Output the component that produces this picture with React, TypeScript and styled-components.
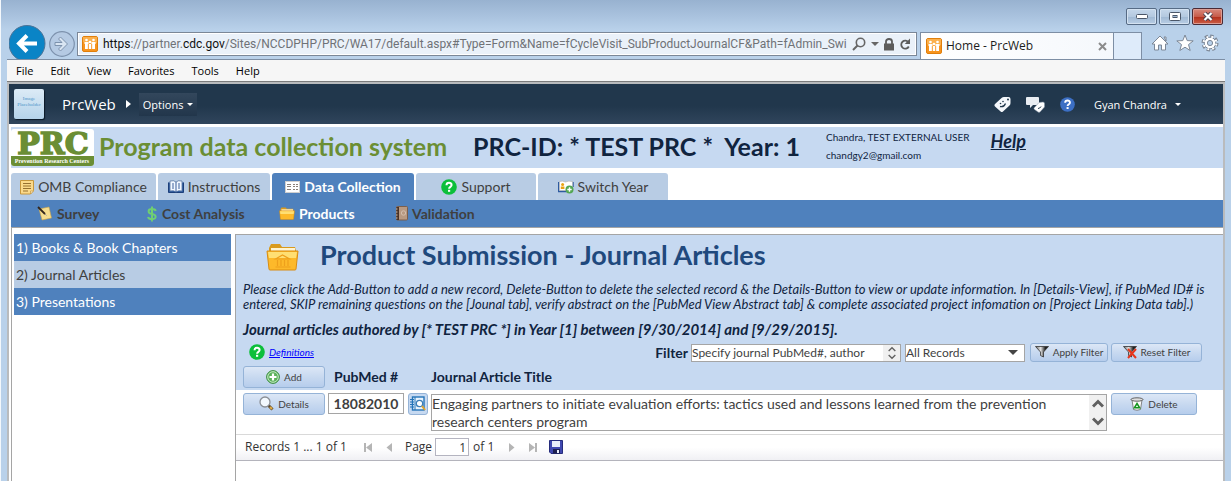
import React from "react";
import styled, { createGlobalStyle } from "styled-components";

const body = `Lato, "Open Sans", sans-serif`;
const chrome = `"Open Sans", "Noto Sans", sans-serif`;

const GlobalStyle = createGlobalStyle`
  * { box-sizing: border-box; }
  body { margin: 0; background: #b9d1ea; font-family: ${body}; color: #10243f; }
  button, input, textarea, select { font-family: inherit; margin: 0; }
  svg { display: block; flex: none; }
  a { color: inherit; text-decoration: none; }
`;

/* ---------- browser window ---------- */

const BrowserWindow = styled.div`
  min-height: 100vh;
  display: flex;
  flex-direction: column;
  padding: 0 6px;
  border-left: 1px solid #f4f8fc;
  background: linear-gradient(#98b2d0, #a9c2de 16px, #b9d1ea 30px, #b9d1ea);
`;

const TitleBar = styled.div`
  display: flex;
  justify-content: flex-end;
  gap: 2px;
  height: 25px;
  padding: 8px 2px 0 0;
`;

const WindowButton = styled.button<{ $close?: boolean }>`
  width: 31px;
  height: 17px;
  padding: 0;
  display: flex;
  align-items: center;
  justify-content: center;
  border: 1px solid ${(p) => (p.$close ? "#4a2a35" : "#566b85")};
  border-radius: 2px;
  box-shadow: inset 0 0 0 1px ${(p) => (p.$close ? "#dd9c92" : "#d4e2f1")};
  background: ${(p) =>
    p.$close
      ? "linear-gradient(#d8897c, #c75c4b 50%, #b22d1a 51%, #cb5f46)"
      : "linear-gradient(#c5d7ea, #b4c9e0 50%, #9fb8d3 51%, #b9cee5)"};
`;

const AddressRow = styled.div`
  display: flex;
  align-items: flex-start;
  height: 35px;
  border-bottom: 1px solid #7d8ea4;
`;

const NavButton = styled.button<{ $small?: boolean }>`
  padding: 0;
  border: 0;
  background: none;
  margin-top: ${(p) => (p.$small ? 6 : 0)}px;
  margin-left: 2px;
`;

const AddressBox = styled.div`
  flex: 1;
  min-width: 0;
  display: flex;
  align-items: center;
  height: 24px;
  margin: 7px 3px 0 2px;
  padding: 0 5px 0 4px;
  gap: 5px;
  border: 1px solid #7b8797;
  box-shadow: inset 0 0 0 1px #fff;
  background: #eaf1f9;
`;

const Url = styled.div`
  flex: 1;
  min-width: 0;
  overflow: hidden;
  white-space: nowrap;
  font: 12px/18px Roboto, sans-serif;
  color: #6f7277;
  b { font-weight: 400; color: #101010; }
`;

const PlainButton = styled.button`
  padding: 0;
  border: 0;
  background: none;
  display: flex;
`;

const BrowserTab = styled.div`
  width: 194px;
  height: 27px;
  margin-top: 7px;
  padding: 0 6px 0 5px;
  display: flex;
  align-items: center;
  gap: 4px;
  border: 1px solid #7d8ea4;
  border-bottom: 0;
  background: linear-gradient(90deg, #fff, #f5f8fc);
  font: 12px/18px ${chrome};
  color: #1c1c1c;
  span { flex: 1; }
`;

const NewTab = styled.button`
  width: 28px;
  height: 27px;
  margin-top: 7px;
  border: 1px solid #7d8ea4;
  border-width: 1px 1px 0 0;
  background: #deebfa;
`;

const ToolIcons = styled.div`
  display: flex;
  gap: 7px;
  margin-top: 9px;
  padding: 0 6px 0 9px;
`;

const MenuBar = styled.nav`
  display: flex;
  gap: 17px;
  height: 22px;
  padding: 0 9px;
  background: #f6f6f6;
  border-bottom: 1px solid #7c7c7c;
  font: 11px/21px ${chrome};
  color: #000;
  button { padding: 0; border: 0; background: none; font: inherit; color: inherit; }
`;

const Page = styled.main`
  flex: 1;
  display: flex;
  flex-direction: column;
  border: 2px solid #b9bbbd;
  border-bottom: 0;
  background: #fff;
`;

/* ---------- site ribbon ---------- */

const Ribbon = styled.header`
  display: flex;
  align-items: center;
  height: 40px;
  padding: 0 42px 0 5px;
  background: linear-gradient(#21374c, #21374c 55%, #30455c);
  color: #fff;
  font-family: ${chrome};
`;

const SiteImage = styled.div`
  width: 30px;
  height: 30px;
  margin-right: 18px;
  padding-top: 7px;
  border-radius: 2px;
  background: linear-gradient(#dcebf6, #b5d3ea);
  box-shadow: 1px 1px 1px #0c1a28;
  color: #4a93c9;
  font: 5px/6px "Liberation Serif", serif;
  text-align: center;
`;

const SiteName = styled.a`
  font-size: 15px;
  margin-right: 10px;
`;

const OptionsButton = styled.button`
  display: flex;
  align-items: center;
  gap: 4px;
  height: 23px;
  margin-left: 8px;
  padding: 0 4px;
  border: 0;
  background: linear-gradient(#33475c, #22364b);
  color: #fff;
  font-size: 11px;
`;

const RibbonTools = styled.div`
  display: flex;
  align-items: center;
  gap: 15px;
  margin-left: auto;
`;

const UserButton = styled.button`
  display: flex;
  align-items: center;
  gap: 8px;
  padding: 0;
  margin-left: 4px;
  border: 0;
  background: none;
  color: #fff;
  font-size: 11px;
`;

/* ---------- banner ---------- */

const Banner = styled.div`
  display: flex;
  align-items: center;
  height: 41px;
  margin: 3px 0 5px 2px;
  background: #c6d9f1;
`;

const BannerTitle = styled.h1<{ $green?: boolean }>`
  margin: 0 0 0 ${(p) => (p.$green ? 5 : 26)}px;
  padding-bottom: 4px;
  font-size: 25px;
  line-height: 30px;
  font-weight: 700;
  white-space: pre;
  color: ${(p) => (p.$green ? "#6b8e34" : "#10243f")};
`;

const Account = styled.div`
  margin-left: 26px;
  padding-bottom: 4px;
  font-size: 10px;
  line-height: 18px;
  white-space: nowrap;
`;

const HelpLink = styled.a`
  align-self: flex-start;
  margin-left: 21px;
  margin-top: 3px;
  font: italic 700 18px/22px ${body};
  text-decoration: underline;
`;

/* ---------- tabs ---------- */

const Tabs = styled.nav`
  display: flex;
  gap: 2px;
  margin-left: 2px;
`;

const Tab = styled.a<{ $width: number; $active?: boolean }>`
  width: ${(p) => p.$width}px;
  height: 27px;
  display: flex;
  align-items: center;
  justify-content: center;
  gap: 4px;
  border-radius: 3px 3px 0 0;
  white-space: nowrap;
  font-size: 14px;
  font-weight: ${(p) => (p.$active ? 700 : 400)};
  color: ${(p) => (p.$active ? "#fff" : "#3f3f3f")};
  background: ${(p) => (p.$active ? "#4f81bd" : "#b8cce4")};
`;

const SubNav = styled.nav`
  display: flex;
  height: 28px;
  margin-left: 2px;
  padding-left: 26px;
  background: #4f81bd;
  border-bottom: 1px solid #a5a5a5;
`;

const SubLink = styled.a<{ $width: number; $active?: boolean }>`
  width: ${(p) => p.$width}px;
  display: flex;
  align-items: center;
  gap: 4px;
  font-size: 14px;
  font-weight: 700;
  white-space: nowrap;
  color: ${(p) => (p.$active ? "#fff" : "#3f3f3f")};
`;

/* ---------- content ---------- */

const Columns = styled.div`
  flex: 1;
  display: flex;
  gap: 4px;
  margin-left: 2px;
  padding: 6px 0 0 2px;
  border-left: 1px solid #a5a5a5;
`;

const SideNav = styled.nav`
  width: 217px;
  display: flex;
  flex-direction: column;
`;

const SideLink = styled.a<{ $active?: boolean }>`
  height: 27px;
  padding-left: 2px;
  font-size: 14px;
  line-height: 27px;
  color: ${(p) => (p.$active ? "#3f3f3f" : "#fff")};
  background: ${(p) => (p.$active ? "#b8cce4" : "#4f81bd")};
`;

const Panel = styled.section`
  flex: 1;
  min-width: 0;
  border: 1px solid #a5a5a5;
  border-width: 1px 0 0 1px;
`;

const PanelHead = styled.div`
  padding: 5px 7px 0;
  background: #c6d9f1;
`;

const TitleRow = styled.div`
  display: flex;
  align-items: center;
  gap: 21px;
  height: 34px;
  padding-left: 23px;
  h2 { margin: 0; padding-bottom: 4px; font-size: 27px; line-height: 30px; color: #1f497d; }
`;

const Instructions = styled.p`
  margin: 8px 0 0;
  font-size: 13px;
  line-height: 15px;
  font-style: italic;
`;

const Scope = styled.p`
  margin: 7px 0 0;
  font-size: 15px;
  line-height: 20px;
  font-weight: 700;
  font-style: italic;
`;

const FilterRow = styled.div`
  display: flex;
  align-items: center;
  height: 27px;
  padding: 0 14px 0 6px;
`;

const Definitions = styled.a`
  display: flex;
  align-items: center;
  gap: 4px;
  margin-right: auto;
  padding-bottom: 2px;
  font-size: 10px;
  font-style: italic;
  color: #0000ff;
  text-decoration: underline;
`;

const FilterLabel = styled.label`
  margin-right: 3px;
  font-size: 14px;
  font-weight: 700;
`;

const ScrollBox = styled.div<{ $width: string; $height: number }>`
  display: flex;
  width: ${(p) => p.$width};
  height: ${(p) => p.$height}px;
  border: 1px solid #a5a5a5;
  background: #fff;
`;

const ScrollText = styled.textarea<{ $size: number; $line: number }>`
  flex: 1;
  min-width: 0;
  padding: 0;
  border: 0;
  outline: 0;
  resize: none;
  overflow: hidden;
  background: none;
  color: #3f3f3f;
  font-size: ${(p) => p.$size}px;
  line-height: ${(p) => p.$line}px;
`;

const ScrollTrack = styled.div`
  width: 17px;
  display: flex;
  flex-direction: column;
  align-items: center;
  justify-content: space-around;
  background: #f0f0f0;
`;

const SelectWrap = styled.div`
  display: grid;
  align-items: center;
  width: 120px;
  height: 18px;
  margin: 0 5px 0 4px;
  border: 1px solid #a5a5a5;
  background: #fff;
  select, svg { grid-area: 1 / 1; }
  svg { justify-self: end; margin-right: 6px; pointer-events: none; }
  select {
    appearance: none;
    width: 100%;
    padding: 0;
    border: 0;
    background: none;
    color: #3f3f3f;
    font-size: 12px;
    line-height: 15px;
  }
`;

const ActionButton = styled.button<{ $width: number; $short?: boolean }>`
  display: inline-flex;
  align-items: center;
  justify-content: center;
  gap: 4px;
  width: ${(p) => p.$width}px;
  height: ${(p) => (p.$short ? 19 : 22)}px;
  padding: 0 0 1px;
  vertical-align: top;
  border: 1px solid #95b3d7;
  border-radius: 3px;
  background: linear-gradient(#dce7f6, #c8d9f0 50%, #b6cdec);
  color: #3f3f3f;
  font-size: 10px;
  line-height: 12px;
  white-space: nowrap;
  & + & { margin-left: 3px; }
`;

const RecordTable = styled.table`
  width: 100%;
  border-collapse: collapse;
  table-layout: fixed;
  th, td { padding: 0; text-align: left; vertical-align: top; }
  th { height: 24px; background: #c6d9f1; font-size: 14px; line-height: 22px; }
  th:first-child, td:first-child { padding-left: 7px; }
  td { height: 44px; padding-top: 3px; border-bottom: 1px solid #d9d9d9; }
  .key { width: 92px; }
  .pubmed { width: 103px; }
  .actions { width: 112px; }
`;

const HeadText = styled.span`
  padding-left: 6px;
`;

const PubMedCell = styled.div`
  display: flex;
  gap: 4px;
`;

const PubMedInput = styled.input`
  width: 76px;
  height: 21px;
  padding: 0;
  border: 1px solid #a5a5a5;
  font-size: 14px;
  font-weight: 700;
  text-align: center;
  color: #3f3f3f;
`;

const LookupButton = styled.button`
  width: 20px;
  height: 22px;
  padding: 0;
  display: flex;
  align-items: center;
  justify-content: center;
  border: 1px solid #95b3d7;
  border-radius: 3px;
  background: #c6d9f1;
`;

const TitleCell = styled.div`
  padding: 1px 4px 0 0;
`;

const Pager = styled.div`
  display: flex;
  align-items: center;
  height: 26px;
  padding-left: 9px;
  border-bottom: 1px solid #b4b4bc;
  background: linear-gradient(#fff 50%, #f0f0f4);
  font: 12px/16px ${chrome};
  color: #333;
`;

const PagerIcon = styled.button<{ $gap: number }>`
  padding: 0;
  border: 0;
  background: none;
  margin-left: ${(p) => p.$gap}px;
`;

const PageLabel = styled.label`
  display: flex;
  align-items: center;
  gap: 3px;
  margin: 0 4px 0 11px;
  input {
    width: 34px;
    height: 18px;
    padding: 0 2px;
    border: 1px solid #b4b4c0;
    font: inherit;
    text-align: right;
    color: #333;
  }
`;

/* ---------- icons ---------- */

const People = () => (
  <svg width="16" height="16" viewBox="0 0 16 16">
    <rect x=".5" y=".5" width="15" height="15" rx="1.5" fill="#f7941e" stroke="#e07f0c" />
    <path d="M1 1h14v6Q8 9 1 6z" fill="#fbb04c" />
    <g fill="#fff">
      <circle cx="4.5" cy="4" r="1.3" /><circle cx="11.5" cy="4" r="1.3" /><circle cx="8" cy="6" r="1.3" />
      <path d="M2.5 6h4v2H6v5H3V8h-.5zM9.5 6h4v2H13v5h-3V8h-.5zM6.5 8h3v5h-3z" />
    </g>
    <path d="M6.3 8v5M9.7 8v5" stroke="#f7941e" strokeWidth=".7" />
  </svg>
);

const Caret = ({ size = 6, color = "#fff" }: { size?: number; color?: string }) => (
  <svg width={size} height={size / 2} viewBox="0 0 6 3"><path d="M0 0h6L3 3z" fill={color} /></svg>
);

const QuestionDot = ({ fill, size = 16 }: { fill: string; size?: number }) => (
  <svg width={size} height={size} viewBox="0 0 16 16">
    <circle cx="8" cy="8" r="7.8" fill={fill} />
    <path d="M5.5 6.2C5.500 3 10.700 3 10.600 6.100c0 1.800-2.500 1.700-2.500 3.600" fill="none" stroke="#fff" strokeWidth="2" />
    <rect x="7" y="10.8" width="2.2" height="2" fill="#fff" />
  </svg>
);

const Chevron = ({ up, size }: { up?: boolean; size: number }) => (
  <svg width={size} height={(size * 3) / 4} viewBox="0 0 12 9">
    <path d={up ? "M1 7.500 6 2.500l5 5" : "M1 1.500l5 5 5-5"} fill="none" stroke="#606060" strokeWidth={size > 8 ? 3 : 2} />
  </svg>
);

const Funnel = ({ reset }: { reset?: boolean }) => (
  <svg width="14" height="14" viewBox="0 0 14 14">
    <defs>
      <linearGradient id={reset ? "fr" : "fa"}><stop stopColor="#666" /><stop offset=".4" stopColor="#e4e4e4" /><stop offset=".75" stopColor="#222" /></linearGradient>
    </defs>
    <path d="M.5 1.500h13L8.500 7v5l-3-1.500V7z" fill={`url(#${reset ? "fr" : "fa"})`} stroke="#333" strokeWidth=".8" />
    {reset && <path d="M5 4l8 9M13 4l-8 9" stroke="#e8361c" strokeWidth="2" />}
  </svg>
);

const Folder = ({ bank }: { bank?: boolean }) => (
  <svg width={bank ? 33 : 16} height={bank ? 28 : 13} viewBox="0 0 33 28" preserveAspectRatio="none">
    <path d="M3 5l2-4h9l2 3h13l1 4v18H3z" fill="#d99a1d" />
    <path d="M5 5h24v6H5z" fill="#fff3cf" />
    <path d="M1 8h31l-2 18q0 1-1 1H4q-1 0-1-1z" fill="#fdb92a" stroke="#d98c10" />
    <path d="M2 9h29l-1 6H3z" fill="#ffdf73" />
    {bank && <path d="M9.500 16l7-4 7 4zM11.500 17v6M15 17v6M18.500 17v6M22 17v6M9.500 24h15" fill="none" stroke="#eea01c" strokeWidth="1.2" />}
  </svg>
);

const Note = () => (
  <svg width="14" height="16" viewBox="0 0 14 16">
    <path d="M.5 1.500h13v10l-3 3.500H.5z" fill="#fbd98a" stroke="#c6963c" />
    <path d="M3 4.500h8M3 7h8M3 9.500h8M3 12h5" stroke="#96702f" />
    <path d="M10.500 15v-3h3z" fill="#fff3d0" stroke="#c6963c" strokeWidth=".7" />
  </svg>
);

const Book = () => (
  <svg width="16" height="14" viewBox="0 0 16 14">
    <path d="M.5 2.500v10h15v-10" fill="#2d5aa0" stroke="#1c3f7a" />
    <path d="M2 1q4-1 6 1 2-2 6-1v10q-4-1-6 1-2-2-6-1z" fill="#f2f7ff" stroke="#57759f" strokeWidth=".8" />
    <path d="M8 2v10M4 4h2M4 6h2M4 8h2M10 4h2M10 6h2M10 8h2" stroke="#3a5f9a" />
  </svg>
);

const Grid = () => (
  <svg width="15" height="12" viewBox="0 0 15 12">
    <rect x=".5" y=".5" width="14" height="11" fill="#fff" stroke="#cfcfcf" />
    <path d="M2 3.500h4M2 5.500h4M2 8.500h4M8 3.500h2M11 3.500h2M8 5.500h2M11 5.500h2M8 8.500h2M11 8.500h2" stroke="#8a8078" />
  </svg>
);

const SwitchIcon = () => (
  <svg width="16" height="14" viewBox="0 0 16 14">
    <path d="M.5 2v9.500h8M15 2v5" fill="none" stroke="#2d5aa0" strokeWidth="1.4" />
    <path d="M1.500 1.500q3-1 6 .5 3-1.500 7-.5v9h-13z" fill="#fff" stroke="#aaa" strokeWidth=".6" />
    <circle cx="4.6" cy="4.5" r="1.5" fill="#e8a313" /><path d="M2.800 9V6.500h3.600V9z" fill="#e8a313" />
    <circle cx="11.5" cy="9.5" r="4" fill="#53a653" /><path d="M11.500 7.300v4.400M9.300 9.500h4.400" stroke="#fff" strokeWidth="1.4" />
  </svg>
);

const SurveyIcon = () => (
  <svg width="16" height="15" viewBox="0 0 16 15">
    <path d="M2 3l10-2 2.500 11L5 14z" fill="#f6dd8e" stroke="#c7a14a" strokeWidth=".6" />
    <path d="M1 1l7 7" stroke="#33261c" strokeWidth="1.8" /><path d="M8 8l1.500 1.500" stroke="#999" />
  </svg>
);

const Dollar = () => (
  <svg width="12" height="16" viewBox="0 0 12 16">
    <path d="M9.800 4.800Q9 3 6 3 2.600 3 2.600 5.300T6 8t3.600 2.700T6 13.200Q2.600 13.200 2 11M6 .5v15" fill="none" stroke="#6fcf72" strokeWidth="2" />
  </svg>
);

const Journal = () => (
  <svg width="13" height="15" viewBox="0 0 13 15">
    <rect x="1.5" y=".5" width="11" height="13.5" rx="1" fill="#b99a82" stroke="#7d5f4b" />
    <path d="M1.500 1h2.500v13H1.500z" fill="#4a3226" />
    <path d="M1 3h1.500M1 6h1.500M1 9h1.500M1 12h1.500" stroke="#cbbdb2" />
    <circle cx="8.5" cy="7" r="2.2" fill="none" stroke="#d5bfad" />
  </svg>
);

const Plus = () => (
  <svg width="14" height="14" viewBox="0 0 14 14">
    <circle cx="7" cy="7" r="6.4" fill="#5cb25c" stroke="#3f8f45" />
    <circle cx="7" cy="7" r="5.3" fill="none" stroke="#c6e8c6" />
    <path d="M7 3.500v7M3.500 7h7" stroke="#fff" strokeWidth="2.2" />
  </svg>
);

const Magnifier = () => (
  <svg width="15" height="15" viewBox="0 0 15 15">
    <path d="M9.500 9.500l4 4" stroke="#5d4a2c" strokeWidth="3" /><path d="M11 11l2 2" stroke="#e2ad45" strokeWidth="2" />
    <circle cx="6" cy="6" r="5" fill="#f3f9ff" stroke="#8a8f96" strokeWidth="1.3" />
  </svg>
);

const Lookup = () => (
  <svg width="16" height="16" viewBox="0 0 16 16">
    <rect x="2.5" y="1" width="11.5" height="13" fill="#e8f3fd" stroke="#2574b8" strokeWidth="1.4" />
    <path d="M0 3.500h4M0 6h4M0 8.500h4M0 11h4" stroke="#2574b8" /><path d="M5 1v13" stroke="#2574b8" />
    <circle cx="9.5" cy="7.5" r="3.2" fill="#fff" stroke="#3d7fb8" strokeWidth="1.3" />
    <path d="M12 10l3 4" stroke="#e0a52e" strokeWidth="2" />
  </svg>
);

const Bin = () => (
  <svg width="14" height="14" viewBox="0 0 14 14">
    <path d="M2 3l1.500 9.500q3.500 1.500 7 0L12 3z" fill="#fafafa" stroke="#777" strokeWidth=".9" />
    <ellipse cx="7" cy="2.5" rx="6" ry="1.7" fill="#ddd" stroke="#555" strokeWidth=".9" />
    <path d="M7 6.500l2.600 4.300H4.400z" fill="none" stroke="#14951f" strokeWidth="1.5" />
  </svg>
);

const Disk = () => (
  <svg width="14" height="14" viewBox="0 0 14 14">
    <path d="M.5.5h13v13H2L.5 12z" fill="#4048b0" stroke="#262c7c" />
    <path d="M3 1h8v6H3z" fill="#e9eefb" /><path d="M4 9h7v4.500H4z" fill="#1d2050" /><path d="M8 10h2v3H8z" fill="#e9eefb" />
  </svg>
);

const Step = ({ back, end }: { back?: boolean; end?: boolean }) => (
  <svg width="9" height="9" viewBox="0 0 9 9">
    <g transform={back ? "translate(9 0) scale(-1 1)" : undefined}>
      <path d={end ? "M0 0l6 4.500L0 9zM6 0h2v9H6z" : "M2 0l5.500 4.500L2 9z"} fill="#b5b5b5" />
    </g>
  </svg>
);

const PrcLogo = () => (
  <svg width="83" height="37" viewBox="0 0 83 37" overflow="visible">
    <rect width="83" height="37" rx="3" fill="#fff" />
    <path d="M0 27h83v7q0 3-3 3H3q-3 0-3-3z" fill="#6b8e34" />
    <text x="42" y="25" textAnchor="middle" fontFamily="DejaVu Serif" fontWeight="700" fontSize="30" fill="#6b8e34" stroke="#6b8e34" strokeWidth="1.5">PRC</text>
    <text x="41" y="34" textAnchor="middle" fontFamily="Liberation Serif" fontWeight="700" fontSize="6" fill="#fff">Prevention Research Centers</text>
  </svg>
);

/* ---------- app ---------- */

export default function App() {
  return (
    <BrowserWindow>
      <GlobalStyle />
      <TitleBar>
        <WindowButton aria-label="Minimize">
          <svg width="12" height="5" viewBox="0 0 12 5"><rect x=".5" y=".5" width="11" height="4" rx="1" fill="#fff" stroke="#4a5668" /></svg>
        </WindowButton>
        <WindowButton aria-label="Maximize">
          <svg width="12" height="9" viewBox="0 0 12 9"><rect x=".5" y=".5" width="11" height="8" rx="1" fill="#fff" stroke="#4a5668" /><rect x="4" y="3.5" width="4" height="2" fill="#9fb8d3" stroke="#4a5668" /></svg>
        </WindowButton>
        <WindowButton $close aria-label="Close">
          <svg width="12" height="9" viewBox="0 0 12 9"><path d="M2.500 1l7 7M9.500 1l-7 7" stroke="#43404f" strokeWidth="4" /><path d="M2.500 1l7 7M9.500 1l-7 7" stroke="#fff" strokeWidth="2.2" /></svg>
        </WindowButton>
      </TitleBar>

      <AddressRow>
        <NavButton aria-label="Back">
          <svg width="38" height="34" viewBox="0 0 38 34">
            <circle cx="18" cy="18.5" r="18" fill="#0a84c6" stroke="#4d7396" />
            <path d="M28 18.500H11M18 10.500l-8 8 8 8" fill="none" stroke="#fff" strokeWidth="4" />
          </svg>
        </NavButton>
        <NavButton $small aria-label="Forward">
          <svg width="26" height="26" viewBox="0 0 26 26">
            <circle cx="13" cy="13" r="12.3" fill="#b5cae3" stroke="#7d92ad" strokeWidth="1.2" />
            <path d="M6 11.500h7l-3.500-3.500 2-2 7 7-7 7-2-2L13 14.500H6z" fill="#d9e5f2" stroke="#7d92ad" />
          </svg>
        </NavButton>
        <AddressBox>
          <People />
          <Url><b>https</b>://partner.<b>cdc.gov</b>/Sites/NCCDPHP/PRC/WA17/default.aspx#Type=Form&amp;Name=fCycleVisit_SubProductJournalCF&amp;Path=fAdmin_Swi</Url>
          <PlainButton aria-label="Search">
            <svg width="14" height="14" viewBox="0 0 14 14"><circle cx="8.5" cy="5.5" r="4.2" fill="none" stroke="#666" strokeWidth="1.6" /><path d="M5.500 8.500L1 13" stroke="#666" strokeWidth="2" /></svg>
          </PlainButton>
          <Caret size={8} color="#666" />
          <svg width="10" height="13" viewBox="0 0 10 13"><path d="M2 6V3.500q0-2.500 3-2.500t3 2.500V6" fill="none" stroke="#5c5c5c" strokeWidth="1.8" /><rect y="5.5" width="10" height="7" fill="#5c5c5c" /></svg>
          <PlainButton aria-label="Refresh">
            <svg width="12" height="13" viewBox="0 0 12 13"><path d="M9.600 4.500A4 4 0 1 0 9.800 8.500" fill="none" stroke="#5c5c5c" strokeWidth="1.8" /><path d="M11 .5V6H5.800z" fill="#5c5c5c" /></svg>
          </PlainButton>
        </AddressBox>
        <BrowserTab>
          <People />
          <span>Home - PrcWeb</span>
          <PlainButton aria-label="Close tab">
            <svg width="9" height="9" viewBox="0 0 9 9"><path d="M1 1l7 7M8 1L1 8" stroke="#8b8b8b" strokeWidth="2" /></svg>
          </PlainButton>
        </BrowserTab>
        <NewTab aria-label="New tab" />
        <ToolIcons>
          <PlainButton aria-label="Home">
            <svg width="18" height="18" viewBox="0 0 18 18"><path d="M9 2l8 8H14.500v6h-4v-5h-3v5h-4v-6H1zM13 3h2v4z" fill="#fff" stroke="#7c8796" strokeLinejoin="round" /></svg>
          </PlainButton>
          <PlainButton aria-label="Favorites">
            <svg width="18" height="18" viewBox="0 0 18 18"><path d="M9 1l2.200 5.600 6 .3-4.700 3.700 1.700 5.900L9 13.200l-5.200 3.300 1.700-5.900L.8 6.900l6-.3z" fill="#fff" stroke="#7c8796" /></svg>
          </PlainButton>
          <PlainButton aria-label="Tools">
            <svg width="18" height="18" viewBox="0 0 18 18">
              <circle cx="9" cy="9" r="6.8" fill="none" stroke="#7c8796" strokeWidth="3.4" strokeDasharray="3.2 2.14" />
              <circle cx="9" cy="9" r="5.8" fill="#fff" stroke="#7c8796" />
              <circle cx="9" cy="9" r="6.4" fill="none" stroke="#fff" strokeWidth="2" strokeDasharray="1.8 3.227" strokeDashoffset="-.6" />
              <circle cx="9" cy="9" r="2.6" fill="#b9d1ea" stroke="#7c8796" />
            </svg>
          </PlainButton>
        </ToolIcons>
      </AddressRow>

      <MenuBar>
        {["File", "Edit", "View", "Favorites", "Tools", "Help"].map((m) => <button key={m}>{m}</button>)}
      </MenuBar>

      <Page>
        <Ribbon>
          <SiteImage>Image<br />Placeholder</SiteImage>
          <SiteName href="#home">PrcWeb</SiteName>
          <svg width="5" height="8" viewBox="0 0 5 8"><path d="M0 0l5 4-5 4z" fill="#fff" /></svg>
          <OptionsButton>Options <Caret size={6} /></OptionsButton>
          <RibbonTools>
            <PlainButton aria-label="Tag">
              <svg width="17" height="17" viewBox="0 0 17 17"><path d="M1 8l6.500-6Q8.500 1 10 1h4.500q2 0 2 2v4q0 1.500-1 2.500L9 15.500q-1.200 1-2.400 0L1 10.500q-1.200-1.200 0-2.500z" fill="#f4f7fb" /><circle cx="14" cy="3.5" r="1" fill="#21374c" /><path d="M6 10.500q4 1 5.500-3" fill="none" stroke="#21374c" strokeWidth="1.3" /><circle cx="6.5" cy="7.5" r=".8" fill="#21374c" /><circle cx="9" cy="5.5" r=".8" fill="#21374c" /></svg>
            </PlainButton>
            <PlainButton aria-label="Comments">
              <svg width="19" height="17" viewBox="0 0 19 17"><path d="M1 1h11q1 0 1 1v6q0 1-1 1H7l-3 3V9H1Q0 9 0 8V2q0-1 1-1z" fill="#e9edf2" /><path d="M8 12l5-5.500 4-.5q1.500 0 1.500 1.500V11L14 16q-1 .8-2 0l-3.500-2.500q-.8-.7-.5-1.500z" fill="#fff" stroke="#8190a2" strokeWidth=".5" /><path d="M12 12.500q2 0 3-2" fill="none" stroke="#21374c" /></svg>
            </PlainButton>
            <PlainButton aria-label="Help"><QuestionDot fill="#3c6fc4" size={15} /></PlainButton>
            <UserButton>Gyan Chandra <Caret size={6} /></UserButton>
          </RibbonTools>
        </Ribbon>

        <Banner>
          <PrcLogo />
          <BannerTitle $green>Program data collection system</BannerTitle>
          <BannerTitle as="h2">{"PRC-ID: * TEST PRC *  Year: 1"}</BannerTitle>
          <Account>Chandra, TEST EXTERNAL USER<br />chandgy2@gmail.com</Account>
          <HelpLink href="#help">Help</HelpLink>
        </Banner>

        <Tabs>
          <Tab href="#omb" $width={145}><Note />OMB Compliance</Tab>
          <Tab href="#instructions" $width={112}><Book />Instructions</Tab>
          <Tab href="#data" $width={142} $active><Grid />Data Collection</Tab>
          <Tab href="#support" $width={120}><QuestionDot fill="#0cbf3a" />Support</Tab>
          <Tab href="#year" $width={130}><SwitchIcon />Switch Year</Tab>
        </Tabs>
        <SubNav>
          <SubLink href="#survey" $width={109}><SurveyIcon />Survey</SubLink>
          <SubLink href="#cost" $width={133}><Dollar />Cost Analysis</SubLink>
          <SubLink href="#products" $width={116} $active><Folder />Products</SubLink>
          <SubLink href="#validation" $width={100}><Journal />Validation</SubLink>
        </SubNav>

        <Columns>
          <SideNav>
            <SideLink href="#books">1) Books &amp; Book Chapters</SideLink>
            <SideLink href="#journals" $active>2) Journal Articles</SideLink>
            <SideLink href="#presentations">3) Presentations</SideLink>
          </SideNav>
          <Panel>
            <PanelHead>
              <TitleRow><Folder bank /><h2>Product Submission - Journal Articles</h2></TitleRow>
              <Instructions>
                Please click the Add-Button to add a new record, Delete-Button to delete the selected record &amp; the Details-Button to view or update information. In [Details-View], if PubMed ID# is entered, SKIP remaining questions on the [Jounal tab], verify abstract on the [PubMed View Abstract tab] &amp; complete associated project infomation on [Project Linking Data tab].)
              </Instructions>
              <Scope>Journal articles authored by [* TEST PRC *] in Year [1] between [9/30/2014] and [9/29/2015].</Scope>
              <FilterRow>
                <Definitions href="#definitions"><QuestionDot fill="#0cbf3a" />Definitions</Definitions>
                <FilterLabel htmlFor="filter">Filter</FilterLabel>
                <ScrollBox $width="210px" $height={18}>
                  <ScrollText id="filter" rows={1} $size={12} $line={16} defaultValue="Specify journal PubMed#, author" />
                  <ScrollTrack><Chevron up size={8} /><Chevron size={8} /></ScrollTrack>
                </ScrollBox>
                <SelectWrap>
                  <select aria-label="Record filter"><option>All Records</option></select>
                  <Caret size={10} color="#444" />
                </SelectWrap>
                <ActionButton $width={78} $short><Funnel />Apply Filter</ActionButton>
                <ActionButton $width={91} $short><Funnel reset />Reset Filter</ActionButton>
              </FilterRow>
            </PanelHead>

            <RecordTable>
              <thead>
                <tr>
                  <th className="key"><ActionButton $width={82}><Plus />Add</ActionButton></th>
                  <th className="pubmed"><HeadText>PubMed #</HeadText></th>
                  <th>Journal Article Title</th>
                  <th className="actions" aria-label="Actions" />
                </tr>
              </thead>
              <tbody>
                <tr>
                  <td><ActionButton $width={82}><Magnifier />Details</ActionButton></td>
                  <td>
                    <PubMedCell>
                      <PubMedInput aria-label="PubMed number" defaultValue="18082010" />
                      <LookupButton aria-label="Look up"><Lookup /></LookupButton>
                    </PubMedCell>
                  </td>
                  <td>
                    <TitleCell>
                      <ScrollBox $width="100%" $height={37}>
                        <ScrollText aria-label="Journal article title" $size={14} $line={18} defaultValue="Engaging partners to initiate evaluation efforts: tactics used and lessons learned from the prevention research centers program" />
                        <ScrollTrack><Chevron up size={12} /><Chevron size={12} /></ScrollTrack>
                      </ScrollBox>
                    </TitleCell>
                  </td>
                  <td><ActionButton $width={86}><Bin />Delete</ActionButton></td>
                </tr>
              </tbody>
            </RecordTable>
            <Pager>
              Records 1 ... 1 of 1
              <PagerIcon $gap={16} aria-label="First page"><Step back end /></PagerIcon>
              <PagerIcon $gap={13} aria-label="Previous page"><Step back /></PagerIcon>
              <PageLabel>Page <input defaultValue="1" /></PageLabel>
              of 1
              <PagerIcon $gap={13} aria-label="Next page"><Step /></PagerIcon>
              <PagerIcon $gap={13} aria-label="Last page"><Step end /></PagerIcon>
              <PagerIcon $gap={11} aria-label="Save"><Disk /></PagerIcon>
            </Pager>
          </Panel>
        </Columns>
      </Page>
    </BrowserWindow>
  );
}
